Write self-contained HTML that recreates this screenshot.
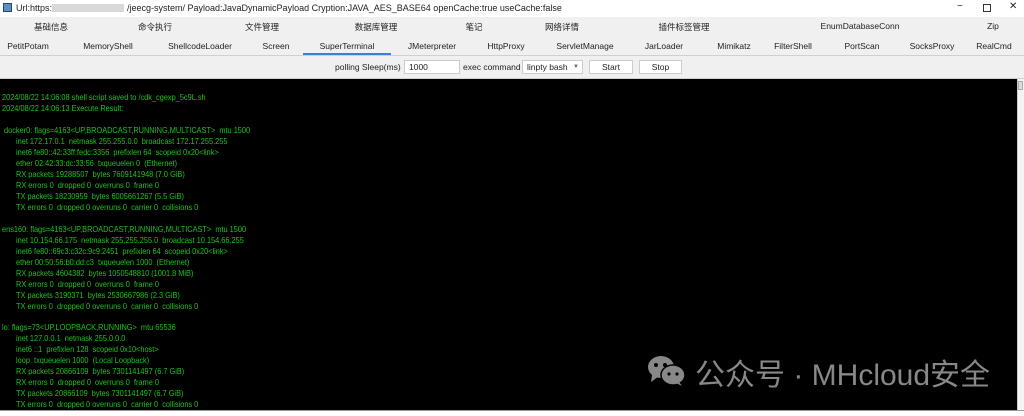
<!DOCTYPE html>
<html><head><meta charset="utf-8"><style>
*{margin:0;padding:0;box-sizing:border-box}
body{width:1024px;height:416px;background:#f0f0f0;font-family:"Liberation Sans","Noto Sans CJK SC",sans-serif;position:relative;overflow:hidden;font-size:9px;color:#222}
.a{position:absolute;white-space:nowrap}
#title{top:0;left:0;width:1024px;height:17px;background:#fff}
.tab1 span,.tab2 span{position:absolute;transform:translateX(-50%);white-space:nowrap}
#term{position:absolute;left:0;top:79px;width:1017px;height:331px;background:#000;color:#1ec31e;font-size:8.4px}
#term div{position:absolute;white-space:pre;transform:scaleX(0.88);transform-origin:0 0}
#term div.wm{transform:none}
.in{left:16px}
.btn{position:absolute;background:#fff;border:1px solid #ccc;height:14px;top:60px;text-align:center;line-height:12px;font-size:8.5px}
</style></head><body>
<div class="a" id="title"></div>
<div class="a" style="left:3px;top:3px;width:9px;height:9px;background:#5b8fc7;border:1px solid #345"></div>
<div class="a" style="left:16px;top:3px;font-size:9px">Url:https:</div>
<div class="a" style="left:52px;top:4px;width:72px;height:8px;background:#d8d8d8"></div>
<div class="a" style="left:127px;top:3px;font-size:9px">/jeecg-system/ Payload:JavaDynamicPayload Cryption:JAVA_AES_BASE64 openCache:true useCache:false</div>
<div class="a" style="left:957px;top:1px;font-size:10px">−</div>
<div class="a" style="left:983px;top:4px;width:8px;height:8px;border:1px solid #333"></div>
<div class="a" style="left:1009px;top:1px;font-size:10px">✕</div>
<div class="tab1" style="position:absolute;top:21px;left:0;width:1024px;font-size:8.5px">
<span style="left:51px">基础信息</span><span style="left:155px">命令执行</span><span style="left:262px">文件管理</span><span style="left:376px">数据库管理</span><span style="left:474px">笔记</span><span style="left:562px">网络详情</span><span style="left:684px">插件标签管理</span><span style="left:860px">EnumDatabaseConn</span><span style="left:993px">Zip</span>
</div>
<div class="tab2" style="position:absolute;top:41px;left:0;width:1024px;font-size:8.5px">
<span style="left:28px">PetitPotam</span><span style="left:108px">MemoryShell</span><span style="left:200px">ShellcodeLoader</span><span style="left:276px">Screen</span><span style="left:347px">SuperTerminal</span><span style="left:432px">JMeterpreter</span><span style="left:506px">HttpProxy</span><span style="left:585px">ServletManage</span><span style="left:664px">JarLoader</span><span style="left:734px">Mimikatz</span><span style="left:793px">FilterShell</span><span style="left:862px">PortScan</span><span style="left:932px">SocksProxy</span><span style="left:994px">RealCmd</span>
</div>
<div class="a" style="left:303px;top:53px;width:88px;height:2px;background:#3c7fd4"></div>
<div class="a" style="left:0;top:55px;width:1024px;height:1px;background:#d0d0d0"></div>
<div class="a" style="left:335px;top:62px;font-size:8.5px">polling Sleep(ms)</div>
<div class="btn" style="left:404px;width:56px;text-align:left;padding-left:4px">1000</div>
<div class="a" style="left:463px;top:62px;font-size:8.5px">exec command</div>
<div class="btn" style="left:522px;width:61px;text-align:left;padding-left:4px">linpty bash <span style="position:absolute;right:3px;font-size:6px;color:#666">▼</span></div>
<div class="btn" style="left:589px;width:44px">Start</div>
<div class="btn" style="left:639px;width:43px">Stop</div>
<div class="a" style="left:0;top:78px;width:1024px;height:1px;background:#d0d0d0"></div>
<div id="term">
<div style="left:2px;top:13px">2024/08/22 14:06:08 shell script saved to /cdk_cgexp_5c9L.sh</div>
<div style="left:2px;top:24px">2024/08/22 14:06:13 Execute Result:</div>
<div style="left:4px;top:46px">docker0: flags=4163&lt;UP,BROADCAST,RUNNING,MULTICAST&gt;  mtu 1500</div>
<div class="in" style="top:57px">inet 172.17.0.1  netmask 255.255.0.0  broadcast 172.17.255.255</div>
<div class="in" style="top:68px">inet6 fe80::42:33ff:fedc:3356  prefixlen 64  scopeid 0x20&lt;link&gt;</div>
<div class="in" style="top:79px">ether 02:42:33:dc:33:56  txqueuelen 0  (Ethernet)</div>
<div class="in" style="top:90px">RX packets 19288507  bytes 7609141948 (7.0 GiB)</div>
<div class="in" style="top:101px">RX errors 0  dropped 0  overruns 0  frame 0</div>
<div class="in" style="top:112px">TX packets 18230959  bytes 6005661267 (5.5 GiB)</div>
<div class="in" style="top:123px">TX errors 0  dropped 0 overruns 0  carrier 0  collisions 0</div>
<div style="left:2px;top:145px">ens160: flags=4163&lt;UP,BROADCAST,RUNNING,MULTICAST&gt;  mtu 1500</div>
<div class="in" style="top:156px">inet 10.154.66.175  netmask 255.255.255.0  broadcast 10.154.66.255</div>
<div class="in" style="top:167px">inet6 fe80::69c3:c32c:9c9:2451  prefixlen 64  scopeid 0x20&lt;link&gt;</div>
<div class="in" style="top:178px">ether 00:50:56:b0:dd:c3  txqueuelen 1000  (Ethernet)</div>
<div class="in" style="top:189px">RX packets 4604382  bytes 1050548810 (1001.8 MiB)</div>
<div class="in" style="top:200px">RX errors 0  dropped 0  overruns 0  frame 0</div>
<div class="in" style="top:211px">TX packets 3190371  bytes 2530667986 (2.3 GiB)</div>
<div class="in" style="top:222px">TX errors 0  dropped 0 overruns 0  carrier 0  collisions 0</div>
<div style="left:2px;top:243px">lo: flags=73&lt;UP,LOOPBACK,RUNNING&gt;  mtu 65536</div>
<div class="in" style="top:254px">inet 127.0.0.1  netmask 255.0.0.0</div>
<div class="in" style="top:265px">inet6 ::1  prefixlen 128  scopeid 0x10&lt;host&gt;</div>
<div class="in" style="top:276px">loop  txqueuelen 1000  (Local Loopback)</div>
<div class="in" style="top:287px">RX packets 20866109  bytes 7301141497 (6.7 GiB)</div>
<div class="in" style="top:298px">RX errors 0  dropped 0  overruns 0  frame 0</div>
<div class="in" style="top:309px">TX packets 20866109  bytes 7301141497 (6.7 GiB)</div>
<div class="in" style="top:320px">TX errors 0  dropped 0 overruns 0  carrier 0  collisions 0</div>
<svg style="position:absolute;left:646px;top:276px" width="42" height="32" viewBox="0 0 42 32">
<ellipse cx="15" cy="12" rx="13" ry="11" fill="#888"/><path d="M6 20 L5 27 L12 22Z" fill="#888"/>
<ellipse cx="27" cy="20" rx="12" ry="10" fill="#888" stroke="#000" stroke-width="1.5"/><path d="M33 27 L36 31 L30 28Z" fill="#888"/>
<circle cx="10" cy="10" r="2" fill="#000"/><circle cx="19" cy="10" r="2" fill="#000"/><circle cx="23" cy="19" r="1.6" fill="#000"/><circle cx="31" cy="19" r="1.6" fill="#000"/>
</svg>
<div class="wm" style="left:695px;top:271px;font-size:30px;color:#888;font-family:'Liberation Sans','Noto Sans CJK SC',sans-serif">公众号 · MHcloud安全</div>
</div>
<div class="a" style="left:1017px;top:79px;width:7px;height:331px;background:#f4f4f4;border-left:1px solid #ccc"></div>
<div class="a" style="left:1018px;top:81px;width:5px;height:9px;background:#ddd;border:1px solid #aaa"></div>
<div class="a" style="left:0;top:410px;width:1024px;height:6px;background:#fff;border-top:1px solid #999"></div>
</body></html>
